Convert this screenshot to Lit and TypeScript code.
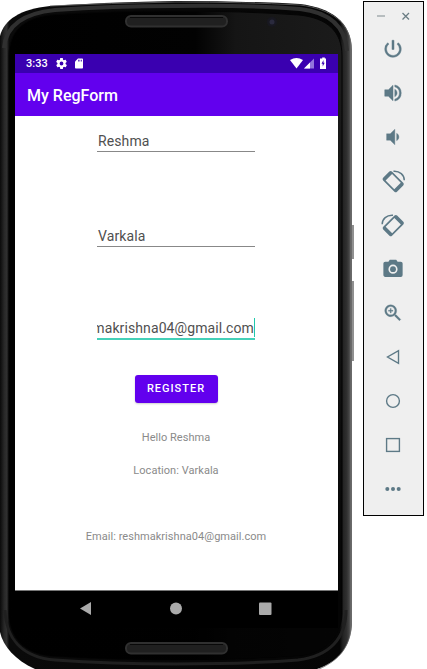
import { LitElement, html, css, svg } from "lit";
import { customElement } from "lit/decorators.js";

const frame = svg`
  <defs>
    <linearGradient id="edge" x1="0" x2="1" y1="0" y2="0">
      <stop offset="0" stop-color="#0a0a0a"/><stop offset=".004" stop-color="#141414"/>
      <stop offset=".012" stop-color="#282828"/><stop offset=".019" stop-color="#303030"/>
      <stop offset=".026" stop-color="#0a0a0a"/><stop offset=".965" stop-color="#050505"/>
      <stop offset=".974" stop-color="#222"/><stop offset=".985" stop-color="#303030"/>
      <stop offset=".992" stop-color="#444"/><stop offset="1" stop-color="#8a8a8a"/>
    </linearGradient>
    <linearGradient id="face" x1="0" x2="1" y1="0" y2="0">
      <stop offset="0" stop-color="#000"/><stop offset=".56" stop-color="#020202"/>
      <stop offset=".68" stop-color="#151515"/><stop offset="1" stop-color="#1b1b1b"/>
    </linearGradient>
    <linearGradient id="fade" x1="0" x2="0" y1="0" y2="1">
      <stop offset="0" stop-color="#000" stop-opacity="0"/><stop offset=".5" stop-color="#000" stop-opacity=".4"/>
      <stop offset=".9" stop-color="#000" stop-opacity=".85"/>
    </linearGradient>
  </defs>
  <path fill="#909090" d="M350 225h4v34h-4zM350 281h4v80h-4z"/>
  <path fill="url(#edge)" d="M0 36C4 20 20 9 50 6Q110 2 176 1Q245 1 300 4C331 8 351 21 352 50V625C350 646 340 661 317 669H35C15 660 3 646 0 632Z"/>
  <path fill="none" stroke="#303030" stroke-width="4" d="M4 48C6 24 25 13 55 10Q110 6 176 6Q250 5 300 9C327 12 345 24 347 51"/>
  <path fill="none" stroke="#666" stroke-width=".8" d="M50 6Q110 3 176 2Q245 2 300 5C331 9 351 22 351.5 50V625C350 646 340 660 319 669"/>
  <path fill="none" stroke="#202020" stroke-width="3" d="M5 610C6 637 20 657 55 660Q110 664 176 664Q250 664 298 660C330 656 346 638 346 610"/>
  <path fill="url(#face)" stroke="#050505" stroke-width="1" d="M9 56C9 32 23 18 50 15Q110 11 176 11Q245 11 299 15C327 18 342 31 342 56V614C341 637 326 653 300 656Q245 660 176 660Q110 660 50 656C24 653 10 638 9 614Z"/>
  <path fill="url(#fade)" d="M9 80H342V614C341 637 326 653 300 656Q245 660 176 660Q110 660 50 656C24 653 10 638 9 614Z"/>
  <g fill="#202020" stroke="#303030" stroke-width="2">
    <rect x="126" y="16" width="101" height="10.5" rx="5"/>
    <rect x="126" y="643" width="101" height="10.5" rx="5"/>
  </g>
  <path stroke="#090909" stroke-width="1" d="M130 17.5H223M130 644.5H223"/>
  <circle cx="272" cy="22" r="5" fill="#181820"/><circle cx="272" cy="22" r="2.5" fill="#2a2a3d"/>
`;

const gear = svg`<path fill="#fff" d="M19.4 13c0-.3.1-.6.1-1s0-.7-.1-1l2.1-1.7c.2-.1.2-.4.1-.6l-2-3.5c-.1-.2-.4-.3-.6-.2l-2.5 1c-.5-.4-1.1-.7-1.7-1L14.500 2.400c0-.2-.2-.4-.5-.4h-4c-.3 0-.5.2-.5.4L9.100 5c-.6.3-1.2.6-1.7 1L4.900 5c-.2-.1-.5 0-.6.2l-2 3.500c-.1.2-.1.5.1.6L4.600 11c-.1.3-.1.6-.1 1s0 .7.1 1l-2.100 1.700c-.2.1-.2.4-.1.6l2 3.500c.1.2.4.3.6.2l2.500-1c.5.4 1.1.7 1.7 1l.4 2.600c0 .2.2.4.5.4h4c.3 0 .5-.2.5-.4l.4-2.600c.6-.3 1.2-.6 1.7-1l2.500 1c.2.1.5 0 .6-.2l2-3.500c.1-.2.1-.5-.1-.6zM12 15.500a3.500 3.500 0 1 1 0-7 3.500 3.500 0 0 1 0 7z"/>`;
const sd = svg`<path fill="#fff" d="M18 2h-8L4 8v12c0 1.1.9 2 2 2h12c1.100 0 2-.9 2-2V4c0-1.100-.9-2-2-2z"/><path fill="#3a00b0" d="M10 4.500h1.500V8H10zm3 0h1.500V8H13zm3 0h1.500V8H16z"/>`;

const rotate = svg`
  <g transform="rotate(45 12.3 12.7)"><path fill-rule="evenodd" d="M7.500 2h9.600a2 2 0 0 1 2 2v17.400a2 2 0 0 1-2 2H7.500a2 2 0 0 1-2-2V4a2 2 0 0 1 2-2zM7.300 6v13.400h10V6z"/></g>
  <path fill="none" stroke="currentColor" stroke-width="1.600" d="M.2 11.200C.2 5.500 5 .9 12 1.400"/>`;

const controls = [
  svg`<path d="M13.100 2.500h-2.200v10h2.200zm4.730 2.670-1.420 1.420A6.920 6.920 0 0 1 19 12a7 7 0 1 1-11.420-5.420L6.170 5.170A8.930 8.930 0 0 0 3 12a9 9 0 1 0 14.830-6.830z" stroke="currentColor" stroke-width=".5"/>`,
  svg`<path stroke="currentColor" stroke-width=".5" d="M3 8.500v7h4l5 5v-17l-5 5zm13.500 3.500A4.500 4.500 0 0 0 14 7.970v8.050A4.480 4.480 0 0 0 16.500 12zM14 3.230v2.060a7 7 0 0 1 0 13.420v2.060a9 9 0 0 0 0-17.540z"/>`,
  svg`<path stroke="currentColor" stroke-width=".4" d="M18.500 12A4.500 4.500 0 0 0 16 7.970v8.050A4.480 4.480 0 0 0 18.500 12zM5 8.500v7h4l5 5v-17l-5 5z"/>`,
  svg`<g transform="translate(24.500 0) scale(-1 1)">${rotate}</g>`,
  svg`${rotate}`,
  svg`<path fill-rule="evenodd" d="M8.500 1.800 7 4H3.500a2 2 0 0 0-2 2v12.600c0 1.100.9 2 2 2h17a2 2 0 0 0 2-2V6a2 2 0 0 0-2-2H17l-1.500-2.200zm3.500 15.400a5 5 0 1 1 0-10 5 5 0 0 1 0 10z"/><circle cx="12" cy="12.200" r="3.200"/>`,
  svg`<path d="M15.500 14h-.79l-.28-.27A6.500 6.500 0 1 0 13.730 14.430l.27.28v.79l5 4.990L20.490 19zm-6 0a4.500 4.500 0 1 1 0-9 4.500 4.500 0 0 1 0 9zM12 10h-2v2H9v-2H7V9h2V7h1v2h2z" stroke="currentColor" stroke-width=".3"/>`,
  svg`<path fill="none" stroke="currentColor" stroke-width="1.500" d="M18 5v14L6 12z"/>`,
  svg`<circle cx="12" cy="12" r="7" fill="none" stroke="currentColor" stroke-width="1.500"/>`,
  svg`<rect x="5" y="5" width="14" height="14" fill="none" stroke="currentColor" stroke-width="1.500"/>`,
  svg`<circle cx="5.800" cy="12" r="2.200"/><circle cx="12" cy="12" r="2.200"/><circle cx="18.200" cy="12" r="2.200"/>`,
];

@customElement("phone-screen")
export class PhoneScreen extends LitElement {
  static styles = css`
    :host { display: flex; flex-direction: column; height: 574px; background: #fff; font-family: Roboto, sans-serif; }
    .status { height: 19px; background: #3a00b0; display: flex; align-items: center; padding: 0 11px; color: #fff; font-size: 11px; font-weight: 500; box-sizing: border-box; }
    .time { width: 29px; }
    .gear { width: 13px; height: 13px; }
    .sd { width: 12px; height: 13px; margin-left: 5px; }
    .signals { width: 37px; height: 13px; margin-left: auto; }
    .appbar { height: 43px; background: #6200ee; color: #fff; padding-left: 12px; font-size: 16px; line-height: 46px; font-weight: 500; }
    .form { height: 474px; display: flex; flex-direction: column; align-items: center; box-sizing: border-box; padding-top: 14px; padding-right: 1px; }
    .field { width: 158px; height: 22px; box-sizing: border-box; border-bottom: 1px solid #888; color: #505050; font-size: 14px; line-height: 22px; letter-spacing: .1px; overflow: hidden; white-space: nowrap; margin-bottom: 73px; padding-left: 1px; }
    .field.last { height: 23px; margin-bottom: 36px; border-bottom: 2px solid #45d0b8; display: flex; justify-content: flex-end; margin-top: -3px; }
    .caret { width: 1px; height: 19px; flex: none; background: #20c9ac; margin-top: 1px; }
    .register { width: 83px; height: 28px; border: 0; border-radius: 3px; background: #6200ee; color: #fff; font: 500 11px/28px Roboto, sans-serif; letter-spacing: 1px; padding: 0; box-shadow: 0 1px 2px #0003; margin-top: -1px; }
    .result { font-size: 11px; line-height: 14px; height: 14px; color: #8a8a8a; letter-spacing: .04px; white-space: nowrap; }
    .hello { margin-top: 28px; }
    .location { margin-top: 19px; }
    .email { margin-top: 52px; }
    .nav { height: 38px; background: #000; border-top: 1px solid #777; box-sizing: border-box; }
    .nav svg { display: block; width: 323px; height: 37px; }
  `;
  render() {
    return html`
      <div class="status">
        <span class="time">3:33</span>
        <svg class="gear" viewBox="0 0 24 24">${gear}</svg>
        <svg class="sd" viewBox="0 0 24 24">${sd}</svg>
        <svg class="signals" viewBox="0 0 37 13">
          <path fill="#fff" d="M0 3Q6.500-1 13 3L6.500 11.500z"/>
          <path fill="#9275dc" d="M24 1.500V11.500H14z"/><path fill="#fff" d="M20 5.500v6h-6z"/>
          <path fill="#fff" d="M31 1.500h1.200V.5h2.600v1H36V12h-6V1.500z"/>
          <path fill="#3a00b0" d="M33.500 3 31.500 6.800h1.200v2.800l2-3.800h-1.200z"/>
        </svg>
      </div>
      <div class="appbar">My RegForm</div>
      <div class="form">
        <div class="field">Reshma</div>
        <div class="field">Varkala</div>
        <div class="field last"><span>reshmakrishna04@gmail.com</span><i class="caret"></i></div>
        <button class="register">REGISTER</button>
        <div class="result hello">Hello Reshma</div>
        <div class="result location">Location: Varkala</div>
        <div class="result email">Email: reshmakrishna04@gmail.com</div>
      </div>
      <div class="nav">
        <svg viewBox="0 0 323 37"><g fill="#aaa"><path d="M76 11v13L65 17.500z"/><circle cx="161" cy="17.500" r="6"/><rect x="244" y="11.500" width="12.500" height="12.500" rx="1"/></g></svg>
      </div>`;
  }
}

@customElement("emulator-controls")
export class EmulatorControls extends LitElement {
  static styles = css`
    :host { display: block; width: 61px; height: 515px; box-sizing: border-box; border: 1px solid #000; background: #efefef; }
    .window { display: flex; height: 25px; }
    .window svg { width: 59px; height: 28px; }
    .slot { display: flex; height: 44px; align-items: center; justify-content: center; padding-right: 2px; }
    .slot svg { width: 22px; height: 22px; fill: #5d7986; color: #5d7986; overflow: visible; }
  `;
  render() {
    return html`
      <div class="window"><svg viewBox="0 0 59 28"><path fill="none" stroke="#9aa2a6" stroke-width="1.300" d="M13 14h8"/><path fill="none" stroke="#6b7d84" stroke-width="1.300" d="M38.500 11l6.500 6.500M45 11l-6.500 6.500"/></svg></div>
      ${controls.map((icon) => html`<div class="slot"><svg viewBox="0 0 24 24">${icon}</svg></div>`)}`;
  }
}

@customElement("app-root")
export class AppRoot extends LitElement {
  static styles = css`
    :host { display: flex; width: 427px; height: 669px; background: #fff; overflow: hidden; }
    .phone { position: relative; width: 354px; height: 669px; box-sizing: border-box; padding: 54px 16px 0 15px; flex: none; }
    .frame { position: absolute; inset: 0; width: 354px; height: 669px; }
    phone-screen { position: relative; width: 323px; }
    emulator-controls { margin: 1px 0 0 9px; flex: none; }
  `;
  render() {
    return html`
      <div class="phone">
        <svg class="frame" viewBox="0 0 354 669">${frame}</svg>
        <phone-screen></phone-screen>
      </div>
      <emulator-controls></emulator-controls>`;
  }
}
